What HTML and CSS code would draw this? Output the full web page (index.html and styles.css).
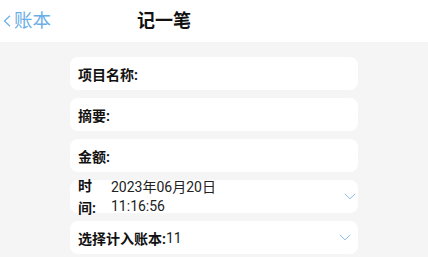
FILE: index.html
```html
<!DOCTYPE html>
<html lang="zh">
<head>
<meta charset="utf-8">
<link rel="stylesheet" href="styles.css">
</head>
<body>
<header class="topbar">
  <div class="back">
    <svg class="back-icon" width="8" height="12" viewBox="0 0 8 12"><path d="M7 0.8 L1.5 6 L7 11.2" fill="none" stroke="#6aaee6" stroke-width="1.2"/></svg>
    <span>账本</span>
  </div>
  <div class="title">记一笔</div>
</header>
<main class="form">
  <div class="card"><span class="label">项目名称:</span></div>
  <div class="card"><span class="label">摘要:</span></div>
  <div class="card"><span class="label">金额:</span></div>
  <div class="card card-time">
    <span class="label label-narrow">时间:</span>
    <span class="value value-time">2023年06月20日<br>11:16:56</span>
    <svg class="chev chev-time" width="12" height="7" viewBox="0 0 12 7"><path d="M0.8 0.8 L6 5.8 L11.2 0.8" fill="none" stroke="#8cbde6" stroke-width="1"/></svg>
  </div>
  <div class="card">
    <span class="label">选择计入账本:</span><span class="value">11</span>
    <svg class="chev chev-book" width="12" height="7" viewBox="0 0 12 7"><path d="M0.8 0.8 L6 5.8 L11.2 0.8" fill="none" stroke="#8cbde6" stroke-width="1"/></svg>
  </div>
</main>
</body>
</html>
```
FILE: styles.css
```css
html, body {
  margin: 0;
  padding: 0;
}
body {
  width: 428px;
  height: 257px;
  overflow: hidden;
  background: #f5f5f5;
  font-family: Roboto, "Noto Sans CJK SC", sans-serif;
  color: #111;
}
.topbar {
  height: 42px;
  background: #fff;
  display: flex;
  align-items: center;
  padding-left: 3px;
}
.back {
  display: flex;
  align-items: center;
  gap: 3px;
  color: #6aaee6;
  font-size: 18.5px;
  line-height: 20px;
}
.back-icon {
  display: block;
}
.title {
  margin-left: 86px;
  font-size: 18px;
  font-weight: bold;
  color: #111;
  line-height: 20px;
}
.form {
  display: flex;
  flex-direction: column;
  gap: 8px;
  padding-top: 15px;
  margin-left: 70px;
  width: 288px;
}
.card {
  height: 33px;
  background: #fff;
  border-radius: 8px;
  display: flex;
  align-items: center;
  padding-left: 8px;
  box-sizing: border-box;
  font-size: 14px;
}
.label {
  font-weight: bold;
  color: #111;
}
.label-narrow {
  width: 28px;
  line-height: 22px;
  flex-shrink: 0;
}
.value {
  color: #222;
}
.value-time {
  margin-left: 5px;
  line-height: 19px;
}
.chev {
  display: block;
  margin-left: auto;
}
.chev-time {
  margin-right: 2px;
}
.chev-book {
  margin-right: 7px;
}
```
